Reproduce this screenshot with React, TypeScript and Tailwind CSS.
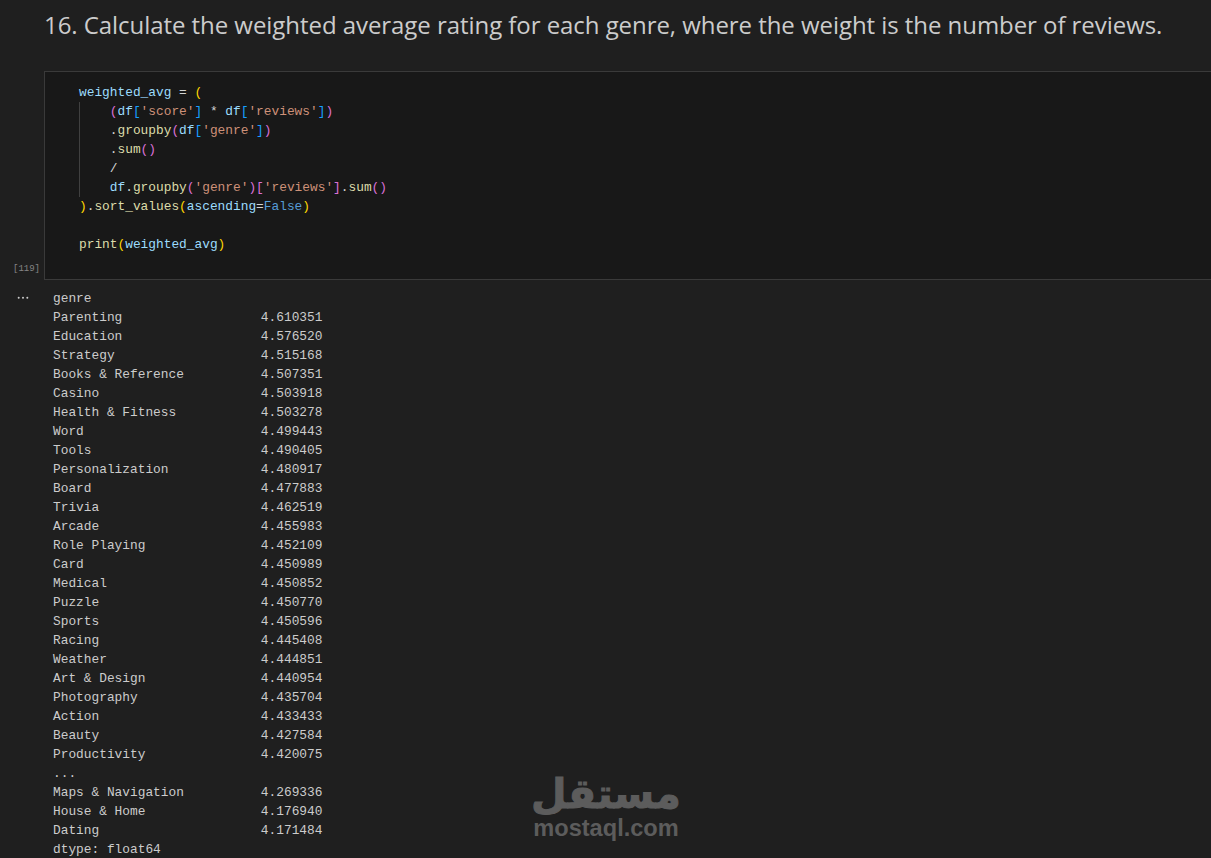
const name = "text-[#9cdcfe]";
const fn = "text-[#dcdcaa]";
const str = "text-[#ce9178]";
const kw = "text-[#569cd6]";
const op = "text-[#d4d4d4]";
const b1 = "text-[#ffd700]";
const b2 = "text-[#da70d6]";
const b3 = "text-[#179fff]";

const output = `genre
Parenting                  4.610351
Education                  4.576520
Strategy                   4.515168
Books & Reference          4.507351
Casino                     4.503918
Health & Fitness           4.503278
Word                       4.499443
Tools                      4.490405
Personalization            4.480917
Board                      4.477883
Trivia                     4.462519
Arcade                     4.455983
Role Playing               4.452109
Card                       4.450989
Medical                    4.450852
Puzzle                     4.450770
Sports                     4.450596
Racing                     4.445408
Weather                    4.444851
Art & Design               4.440954
Photography                4.435704
Action                     4.433433
Beauty                     4.427584
Productivity               4.420075
...
Maps & Navigation          4.269336
House & Home               4.176940
Dating                     4.171484
dtype: float64`;

const App = () => {
  return (
    <div className="relative h-[858px] overflow-hidden bg-[#1f1f1f] pt-[9px] font-['Liberation_Mono',monospace] text-[12.83px] leading-[19px] text-[#cccccc]">
      {/* markdown heading */}
      <h1 className="mb-[30px] whitespace-nowrap pl-[44px] font-['Open_Sans',sans-serif] text-[24px] leading-[32px] font-normal tracking-[-0.055px] text-[#cccccc]">
        16. Calculate the weighted average rating for each genre, where the weight is the number of reviews.
      </h1>

      {/* code cell */}
      <div className="flex">
        <div className="flex w-[44px] shrink-0 items-end justify-end pr-[4px] pb-[4px] text-[9px] leading-[13px] text-[#858585]">
          [119]
        </div>
        <pre className="h-[209px] flex-1 border-y border-l border-[#3a3a3a] bg-[#181818] pt-[11px] pl-[34px] font-['Liberation_Mono',monospace]">
          <div>
            <span className={name}>weighted_avg</span> <span className={op}>=</span> <span className={b1}>(</span>
          </div>
          <div className="border-l border-[#404040] pl-[29.8px]">
            <div>
              <span className={b2}>(</span>
              <span className={name}>df</span>
              <span className={b3}>[</span>
              <span className={str}>'score'</span>
              <span className={b3}>]</span> <span className={op}>*</span> <span className={name}>df</span>
              <span className={b3}>[</span>
              <span className={str}>'reviews'</span>
              <span className={b3}>]</span>
              <span className={b2}>)</span>
            </div>
            <div>
              <span className={op}>.</span>
              <span className={fn}>groupby</span>
              <span className={b2}>(</span>
              <span className={name}>df</span>
              <span className={b3}>[</span>
              <span className={str}>'genre'</span>
              <span className={b3}>]</span>
              <span className={b2}>)</span>
            </div>
            <div>
              <span className={op}>.</span>
              <span className={fn}>sum</span>
              <span className={b2}>()</span>
            </div>
            <div className={op}>/</div>
            <div>
              <span className={name}>df</span>
              <span className={op}>.</span>
              <span className={fn}>groupby</span>
              <span className={b2}>(</span>
              <span className={str}>'genre'</span>
              <span className={b2}>)</span>
              <span className={b2}>[</span>
              <span className={str}>'reviews'</span>
              <span className={b2}>]</span>
              <span className={op}>.</span>
              <span className={fn}>sum</span>
              <span className={b2}>()</span>
            </div>
          </div>
          <div>
            <span className={b1}>)</span>
            <span className={op}>.</span>
            <span className={fn}>sort_values</span>
            <span className={b1}>(</span>
            <span className={name}>ascending</span>
            <span className={op}>=</span>
            <span className={kw}>False</span>
            <span className={b1}>)</span>
          </div>
          <div>&nbsp;</div>
          <div>
            <span className={fn}>print</span>
            <span className={b1}>(</span>
            <span className={name}>weighted_avg</span>
            <span className={b1}>)</span>
          </div>
        </pre>
      </div>

      {/* cell output */}
      <div className="flex pt-[9px]">
        <div className="flex w-[53px] shrink-0 pt-[3px] pl-[17px]">
          <svg width="12" height="12" viewBox="0 0 12 12" fill="#cccccc">
            <circle cx="1.7" cy="5.7" r="1" />
            <circle cx="6" cy="5.7" r="1" />
            <circle cx="10.3" cy="5.7" r="1" />
          </svg>
        </div>
        <pre className="font-['Liberation_Mono',monospace]">{output}</pre>
      </div>

      {/* watermark */}
      <div className="absolute top-[772px] left-[533px] flex w-[146px] flex-col items-center text-[#5c5c5c]">
        <span dir="rtl" className="h-[44px] font-['DejaVu_Sans',sans-serif] text-[41px] leading-[44px] font-bold [-webkit-text-stroke:1px_#5c5c5c]">
          مستقل
        </span>
        <span className="font-['Liberation_Sans',sans-serif] text-[23.6px] leading-[24px] font-bold">mostaql.com</span>
      </div>
    </div>
  );
};

export default App;
